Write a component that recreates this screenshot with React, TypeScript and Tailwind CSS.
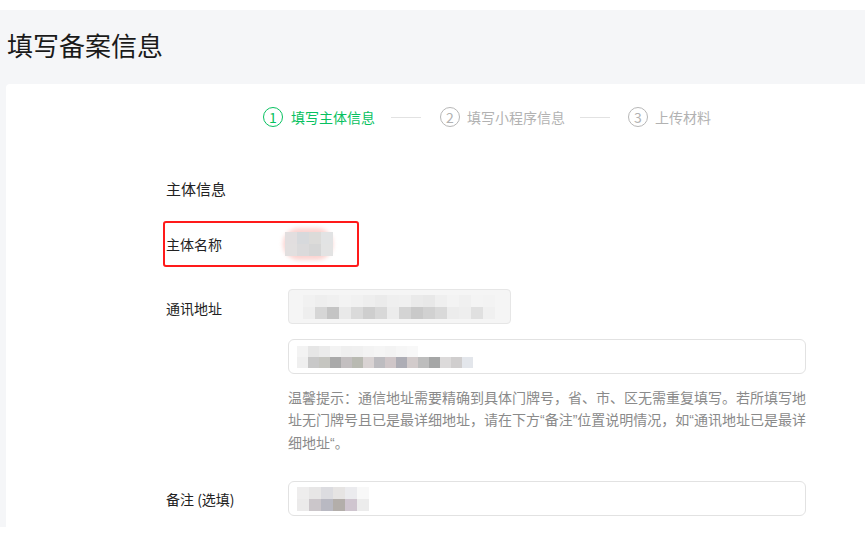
import React from "react";

const font = { fontFamily: '"Noto Sans CJK SC", "Noto Sans", sans-serif' };

function Mosaic({ rows, size = 12 }: { rows: string[][]; size?: number }) {
  return (
    <div className="flex flex-col blur-[0.6px]">
      {rows.map((r, i) => (
        <div key={i} className="flex">
          {r.map((c, j) => (
            <div key={j} style={{ width: size, height: size, background: c }} />
          ))}
        </div>
      ))}
    </div>
  );
}

function StepCircle({ n, active }: { n: number; active?: boolean }) {
  return (
    <div
      className={
        "flex h-[20px] w-[20px] items-center justify-center rounded-full border text-[14px] leading-none " +
        (active ? "border-[#07c160] text-[#07c160]" : "border-[#b7b7b7] text-[#b2b2b2]")
      }
    >
      {n}
    </div>
  );
}

function Q({ c }: { c: string }) {
  return <span style={{ fontFamily: '"Liberation Sans", sans-serif' }}>{c}</span>;
}

export default function App() {
  return (
    <div className="bg-white pt-[10px] pb-[10px] overflow-hidden" style={font}>
      <div className="bg-[#f5f6f8] pl-[6px] h-[517px] overflow-hidden">
        <div className="h-[74px] flex items-center pl-[1px] pb-[4px]">
          <h1 className="text-[26px] leading-none text-[#1a1a1a] font-normal">填写备案信息</h1>
        </div>
        <div className="bg-white h-[443px] rounded-tl-[4px]">
          {/* steps */}
          <div className="flex items-center pt-[23px] pl-[257px] h-[43px]">
            <StepCircle n={1} active />
            <span className="ml-[8px] text-[14px] text-[#07c160]">填写主体信息</span>
            <div className="ml-[16px] mr-[19px] h-px w-[30px] bg-[#e2e2e2]" />
            <StepCircle n={2} />
            <span className="ml-[7px] text-[14px] text-[#b2b2b2]">填写小程序信息</span>
            <div className="ml-[15px] mr-[18px] h-px w-[30px] bg-[#e2e2e2]" />
            <StepCircle n={3} />
            <span className="ml-[7px] text-[14px] text-[#b2b2b2]">上传材料</span>
          </div>

          <div className="pl-[160px]">
            <div className="pt-[51px] text-[15px] leading-[22px] text-[#222]">主体信息</div>

            {/* 主体名称 */}
            <div className="relative mt-[21px] flex h-[46px] items-center">
              <div className="w-[119px] text-[14px] text-[#222]">主体名称</div>
              <div className="relative">
                <div className="absolute -left-[2px] -top-[4px] h-[32px] w-[50px] rounded-full bg-[#fbd3d0] blur-[2px]" />
                <div className="relative">
                  <Mosaic
                    size={12}
                    rows={[
                      ["#e2dedf", "#d7d9dc", "#dcdbd9", "#e2e3e4"],
                      ["#e2dfdf", "#dbdadb", "#d6d6d6", "#e3e3e3"],
                    ]}
                  />
                </div>
              </div>
              <div className="pointer-events-none absolute -left-[3px] top-0 h-[46px] w-[196px] rounded-[3px] border-2 border-[#ff1a1a]" />
            </div>

            {/* 通讯地址 */}
            <div className="mt-[22px] flex">
              <div className="w-[122px] pt-[9px] text-[14px] text-[#222]">通讯地址</div>
              <div className="flex flex-col">
                <div className="flex h-[35px] w-[223px] items-center rounded-[4px] border border-[#e6e6e6] bg-[#f5f5f5] pl-[14px]">
                  <Mosaic
                    size={12}
                    rows={[
                      ["#f1f1f1", "#eeeeee", "#f0f0f0", "#f3f3f3", "#f1f1f1", "#eeeeee", "#ebebeb", "#efefef", "#f0f0f0", "#eaeaea", "#e8e8e8", "#efefef", "#f3f3f3", "#f0f0f0", "#f4f4f4", "#f3f3f3"],
                      ["#eeeeee", "#d6d6d6", "#c4c4c4", "#e9e9e9", "#dadada", "#cecece", "#d8d8d8", "#ececec", "#d4d4d4", "#c9c9c9", "#d1d1d1", "#d9d9d9", "#ececec", "#eeeeee", "#e0e0e0", "#f0f0f0"],
                    ]}
                  />
                </div>
                <div className="mt-[15px] flex h-[35px] w-[518px] items-center rounded-[6px] border border-[#e2e2e2] bg-white pl-[8px]">
                  <Mosaic
                    size={11}
                    rows={[
                      ["#f3f3f3", "#e6e6e6", "#ebebeb", "#f3f3f3", "#efefef", "#f0f0f0", "#f3f3f3", "#f5f5f5", "#f3f3f3", "#f6f6f6", "#f8f8f8", "#ffffff", "#ffffff", "#ffffff", "#ffffff", "#ffffff", "#ffffff"],
                      ["#efefef", "#c8c8c8", "#c5c5c0", "#a9a9a9", "#c3bfc0", "#b9bab2", "#d9d3d3", "#bdbcc0", "#cfc6c8", "#adadb5", "#d2cbcb", "#bdbdbd", "#a5a6a6", "#dcdada", "#d0cece", "#e3e6eb", "#ffffff"],
                    ]}
                  />
                </div>
                <p className="mt-[12px] w-[518px] text-[14px] leading-[22px] text-[#8a8a8a]">
                  温馨提示：通信地址需要精确到具体门牌号，省、市、区无需重复填写。若所填写地址无门牌号且已是最详细地址，请在下方<Q c="“" />备注<Q c="”" />位置说明情况，如<Q c="“" />通讯地址已是最详细地址<Q c="“" />。
                </p>
              </div>
            </div>

            {/* 备注 */}
            <div className="mt-[27px] flex items-center">
              <div className="w-[122px] pt-[2px] text-[14px] text-[#222]">备注 (选填)</div>
              <div className="flex h-[35px] w-[518px] items-center rounded-[6px] border border-[#e2e2e2] bg-white pl-[8px]">
                <Mosaic
                  size={12}
                  rows={[
                    ["#eeeded", "#e7e6e6", "#dcdce0", "#e6e4e3", "#ebebee", "#f8f8f8"],
                    ["#ebeaea", "#cbc6ca", "#b9b9c2", "#b3aeaa", "#cfc5cf", "#ececec"],
                  ]}
                />
              </div>
            </div>
          </div>
        </div>
      </div>
    </div>
  );
}
